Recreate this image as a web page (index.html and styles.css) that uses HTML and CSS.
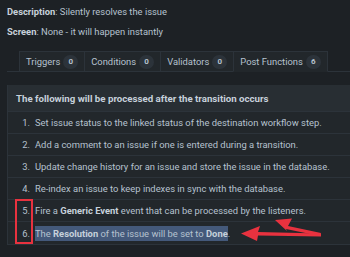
FILE: index.html
```html
<!DOCTYPE html>
<html>
<head>
<meta charset="utf-8">
<link rel="stylesheet" href="styles.css">
</head>
<body>
<div class="page">
  <p class="meta"><b>Description</b>: Silently resolves the issue</p>
  <p class="meta"><b>Screen</b>: None - it will happen instantly</p>
  <div class="tabs">
    <div class="tab">Triggers <span class="badge">0</span></div>
    <div class="tab">Conditions <span class="badge">0</span></div>
    <div class="tab">Validators <span class="badge">0</span></div>
    <div class="tab active">Post Functions <span class="badge">6</span></div>
  </div>
  <div class="panel">
    <div class="head">The following will be processed after the transition occurs</div>
    <ol class="rows">
      <li class="row"><span class="num">1.</span><span>Set issue status to the linked status of the destination workflow step.</span></li>
      <li class="row"><span class="num">2.</span><span>Add a comment to an issue if one is entered during a transition.</span></li>
      <li class="row"><span class="num">3.</span><span>Update change history for an issue and store the issue in the database.</span></li>
      <li class="row"><span class="num">4.</span><span>Re-index an issue to keep indexes in sync with the database.</span></li>
      <li class="row"><span class="num">5.</span><span>Fire a <b>Generic Event</b> event that can be processed by the listeners.</span></li>
      <li class="row last"><span class="num">6.</span><span><span class="sel">The <b>Resolution</b> of the issue will be set to <b>Done</b></span>.</span></li>
    </ol>
  </div>
</div>
<svg class="annot" width="350" height="257" viewBox="0 0 350 257">
  <rect x="16" y="200" width="16" height="43" fill="none" stroke="#e8323f" stroke-width="2"/>
  <polygon points="275,220 292,218.5 288,226 321,233 320,236 286,229 287,231" fill="#e8323f"/>
  <polygon points="241,233.5 260,226 258,232 321,233.5 321,236.5 258,235.5 257,241" fill="#e8323f"/>
</svg>
</body>
</html>
```
FILE: styles.css
```css
html, body {
  margin: 0;
  padding: 0;
  background: #1d2125;
  overflow: hidden;
}
body {
  width: 350px;
  height: 257px;
  position: relative;
  font-family: Roboto, "Liberation Sans", Arial, sans-serif;
  font-size: 9.4px;
  color: #b6c2cf;
  white-space: nowrap;
}
.page {
  padding: 5px 0 0 7px;
}
.meta {
  margin: 0 0 6px 0;
  line-height: 14px;
}
.meta b {
  color: #c7d1db;
  font-weight: 700;
}
.tabs {
  display: flex;
  margin-top: 12px;
  padding-left: 12px;
  border-bottom: 1px solid #2c333a;
  width: 400px;
}
.tab {
  display: flex;
  align-items: center;
  gap: 3px;
  height: 19px;
  padding: 0 6px;
  background: #22272b;
  border-top: 1px solid #2c333a;
  border-left: 1px solid #2c333a;
}
.tab.active {
  border-right: 1px solid #2c333a;
  border-bottom: 1px solid #22272b;
  margin-bottom: -1px;
}
.badge {
  display: inline-flex;
  align-items: center;
  justify-content: center;
  width: 15px;
  height: 14px;
  border-radius: 7px;
  background: #2c333a;
  font-size: 8px;
  font-weight: 700;
  color: #b6c2cf;
}
.panel {
  margin-top: 13px;
  width: 400px;
  background: #22272b;
  border-left: 1px solid #2c333a;
  border-bottom: 1px solid #2c333a;
}
.head {
  height: 26px;
  display: flex;
  align-items: center;
  padding-left: 8px;
  background: #282e33;
  font-weight: 700;
  font-size: 9.7px;
  color: #c7d1db;
  border-bottom: 1px solid #2c333a;
}
.rows {
  list-style: none;
  margin: 0;
  padding: 0;
}
.row {
  display: flex;
  align-items: center;
  height: 21px;
  border-bottom: 1px solid #2c333a;
}
.row.last {
  border-bottom: none;
  height: 22px;
}
.num {
  width: 22px;
  margin-right: 5px;
  text-align: right;
  flex: none;
}
.row b {
  color: #c7d1db;
}
.sel {
  background: #44597a;
  padding: 2px 0;
}
.annot {
  position: absolute;
  left: 0;
  top: 0;
  pointer-events: none;
}
```
